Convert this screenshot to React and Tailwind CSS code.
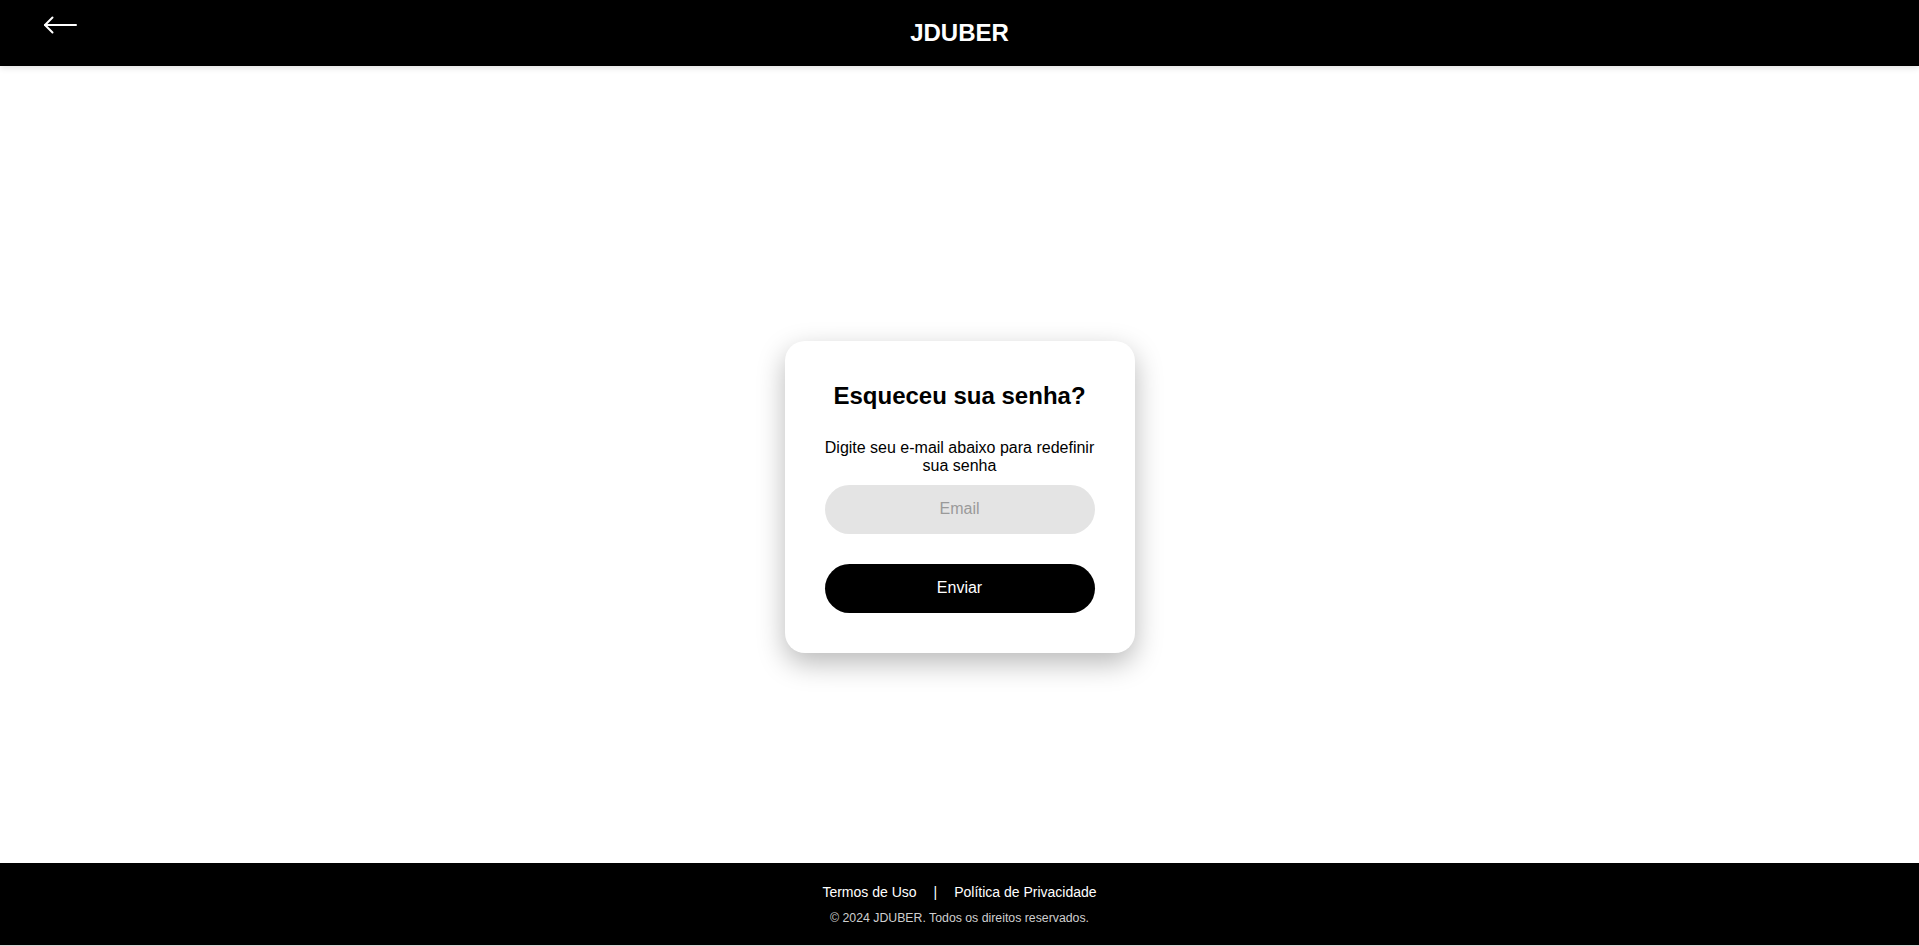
import { useState } from "react";

const BackArrow = () => (
  <svg width="34" height="18" viewBox="0 0 34 18" fill="none" stroke="white" strokeWidth="2" strokeLinecap="round" strokeLinejoin="round">
    <path d="M2 9 H33" />
    <path d="M9.5 1.5 L2 9 L9.5 16.5" />
  </svg>
);

const App = () => {
  const [email, setEmail] = useState("");

  return (
    <div className="min-h-screen flex flex-col bg-white" style={{ fontFamily: '"Liberation Sans", Arial, sans-serif' }}>
      {/* Header */}
      <header className="relative h-[66px] bg-black flex items-center justify-center shadow-[0_2px_6px_rgba(0,0,0,0.12)] z-10">
        <button className="absolute left-[43px] top-[16px]">
          <BackArrow />
        </button>
        <h1 className="text-white text-[24px] font-bold">JDUBER</h1>
      </header>

      {/* Content */}
      <main className="flex-1 flex items-center justify-center pt-[64px]">
        <div className="w-[350px] bg-white rounded-[20px] shadow-[0_10px_28px_rgba(0,0,0,0.28)] px-[40px] pt-[41px] pb-[40px] flex flex-col items-center">
          <h2 className="text-[24px] font-bold text-black leading-[28px]">Esqueceu sua senha?</h2>
          <p className="mt-[29px] text-[16px] leading-[18px] text-black text-center">
            Digite seu e-mail abaixo para redefinir sua senha
          </p>
          <input
            type="email"
            value={email}
            onChange={(e) => setEmail(e.target.value)}
            placeholder="Email"
            className="mt-[10px] w-full h-[49px] rounded-full bg-[#e4e4e4] text-center text-[16px] placeholder:text-[#9a9a9a] outline-none"
          />
          <button className="mt-[30px] w-full h-[49px] rounded-full bg-black text-white text-[16px]">
            Enviar
          </button>
        </div>
      </main>

      {/* Footer */}
      <footer className="h-[83px] bg-black border-b border-[#d4d4d4] flex flex-col items-center pt-[21px]">
        <div className="flex items-center text-white text-[14px] leading-[16px]">
          <a href="#">Termos de Uso</a>
          <span className="mx-[17px]">|</span>
          <a href="#">Política de Privacidade</a>
        </div>
        <p className="mt-[11px] text-[#cfcfcf] text-[12.3px] leading-[14px]">© 2024 JDUBER. Todos os direitos reservados.</p>
      </footer>
    </div>
  );
};

export default App;
